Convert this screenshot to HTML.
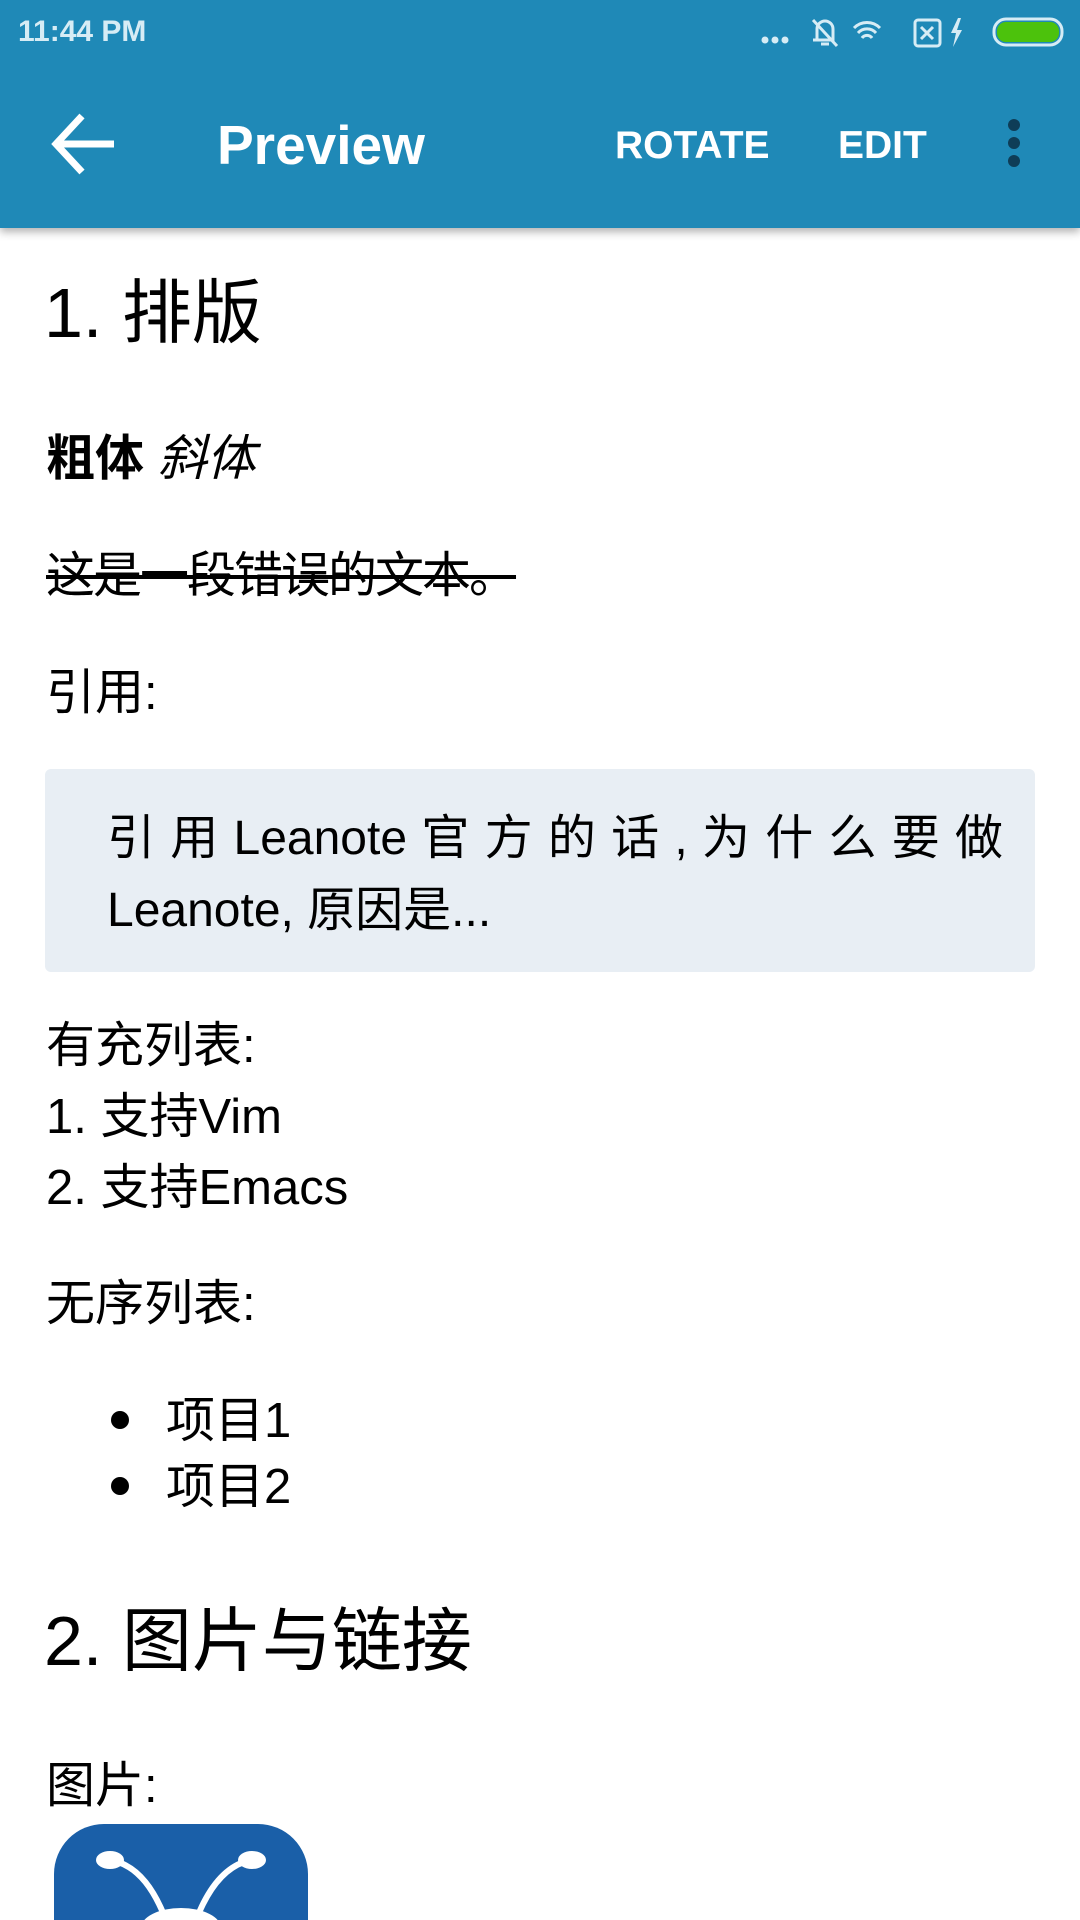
<!DOCTYPE html>
<html><head><meta charset="utf-8">
<style>
*{margin:0;padding:0;box-sizing:border-box}
body{width:1080px;height:1920px;overflow:hidden;background:#fff;position:relative;font-family:"Liberation Sans","Noto Sans CJK SC",sans-serif;color:#000}
.bar{position:absolute;left:0;top:0;width:1080px;height:228px;background:#1f89b7;box-shadow:0 4px 8px rgba(0,0,0,.3);z-index:2}
.t{position:absolute;white-space:nowrap}
.b{font-size:49px;line-height:72px;left:46px}
</style></head><body>
<div class="bar">
  <div class="t" style="left:18px;top:14px;font-size:30px;font-weight:bold;color:#d6ecf5;line-height:36px">11:44 PM</div>
  <svg style="position:absolute;left:755px;top:14px" width="310" height="36" viewBox="0 0 310 36">
    <g fill="#d6ecf5">
      <circle cx="10" cy="26" r="3.5"/><circle cx="20" cy="26" r="3.5"/><circle cx="30" cy="26" r="3.5"/>
    </g>
    <g stroke="#d6ecf5" stroke-width="3" fill="none">
      <path d="M62 26 V15 a8 8 0 0 1 16 0 V26 H58 M66 30 h8 M58 6 L82 32"/>
      <path d="M99 14 a18 18 0 0 1 26 0 M103 19 a12 12 0 0 1 18 0 M107 24 a6 6 0 0 1 10 0"/>
      <rect x="160" y="6" width="25" height="26" rx="3"/>
      <path d="M166 13 l12 12 M178 13 l-12 12"/>
      <rect x="239" y="5" width="68" height="26" rx="12"/>
    </g>
    <path d="M203 4 l-7 15 h5 l-3 14 l9 -17 h-5 l4 -12z" fill="#d6ecf5"/>
    <rect x="242" y="8" width="62" height="20" rx="9" fill="#4cc20c"/>
  </svg>
  <svg style="position:absolute;left:48px;top:112px" width="70" height="64" viewBox="0 0 70 64">
    <path d="M66 32 H8 M34 4 L8 32 L34 60" stroke="#fff" stroke-width="7" fill="none"/>
  </svg>
  <div class="t" style="left:217px;top:112px;font-size:55px;font-weight:bold;color:#fff;line-height:66px">Preview</div>
  <div class="t" style="left:615px;top:121px;font-size:39px;font-weight:bold;color:#fff;line-height:50px">ROTATE</div>
  <div class="t" style="left:838px;top:121px;font-size:39px;font-weight:bold;color:#fff;line-height:50px">EDIT</div>
  <svg style="position:absolute;left:1000px;top:118px" width="28" height="56" viewBox="0 0 28 56">
    <g fill="#0e3d57"><circle cx="14" cy="7" r="6"/><circle cx="14" cy="25" r="6"/><circle cx="14" cy="43" r="6"/></g>
  </svg>
</div>

<div class="t" style="left:44px;top:270px;font-size:70px;line-height:86px">1. 排版</div>
<div class="t b" style="top:423px"><b>粗体</b> <i>斜体</i></div>
<div class="t b" style="top:540px;letter-spacing:-2px"><s>这是一段错误的文本。</s></div>
<div class="t b" style="top:657px">引用:</div>

<div style="position:absolute;left:45px;top:769px;width:990px;height:203px;background:#e8eef4;border-radius:6px"></div>
<div style="position:absolute;left:107px;top:803px;width:896px;font-size:48px;line-height:72px;text-align:justify;text-justify:inter-character">引 用 Leanote 官 方 的 话 , 为 什 么 要 做 Leanote, 原因是...</div>

<div class="t b" style="top:1010px">有充列表:</div>
<div class="t b" style="top:1081px">1. 支持Vim</div>
<div class="t b" style="top:1152px">2. 支持Emacs</div>
<div class="t b" style="top:1268px">无序列表:</div>
<div style="position:absolute;left:111px;top:1411px;width:18px;height:18px;border-radius:50%;background:#000"></div>
<div class="t b" style="left:166px;top:1385px">项目1</div>
<div style="position:absolute;left:111px;top:1477px;width:18px;height:18px;border-radius:50%;background:#000"></div>
<div class="t b" style="left:166px;top:1451px">项目2</div>

<div class="t" style="left:44px;top:1598px;font-size:70px;line-height:86px">2. 图片与链接</div>
<div class="t b" style="top:1750px">图片:</div>

<svg style="position:absolute;left:54px;top:1824px" width="254" height="96" viewBox="0 0 254 96">
  <path d="M0 96 V50 A50 50 0 0 1 50 0 H204 A50 50 0 0 1 254 50 V96 Z" fill="#1a5fa8"/>
  <g stroke="#fff" stroke-width="6" fill="none">
    <path d="M112 96 C100 65 85 45 64 38"/>
    <path d="M142 96 C154 65 170 45 190 38"/>
  </g>
  <ellipse cx="56" cy="36" rx="14" ry="9" fill="#fff"/>
  <ellipse cx="198" cy="36" rx="14" ry="9" fill="#fff"/>
  <ellipse cx="127" cy="104" rx="40" ry="20" fill="#fff"/>
</svg>
</body></html>
